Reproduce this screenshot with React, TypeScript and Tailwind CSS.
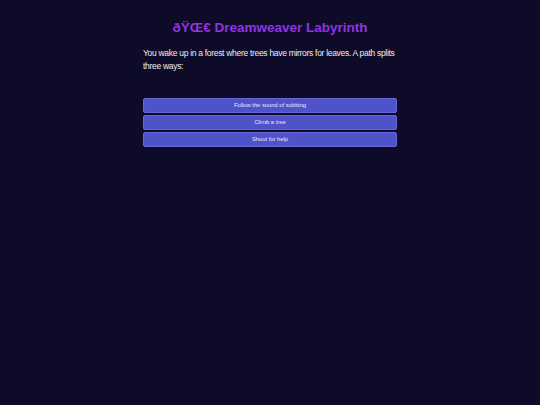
export default function App() {
  const choices = ['Follow the sound of sobbing', 'Climb a tree', 'Shout for help'];
  return (
    <div className="min-h-screen w-full bg-[#0e0b29] font-['Liberation_Sans',Arial,sans-serif] text-[#e5e3f5]">
      <div className="mx-auto w-[254px] pt-[19px]">
        <h1 className="text-center text-[13.5px] leading-[17px] font-bold text-[#9034e0]">ðŸŒ€ Dreamweaver Labyrinth</h1>
        <p className="mt-[11px] text-[8.5px] leading-[13px] tracking-[-0.3px] text-[#ecebf7]">
          You wake up in a forest where trees have mirrors for leaves. A path splits three ways:
        </p>
        <div className="mt-[25px] flex flex-col gap-[2px]">
          {choices.map((c) => (
            <button
              key={c}
              className="h-[15px] w-full rounded-[2px] border border-[#6567d8] bg-[#5052c9] text-[5.8px] leading-none text-[#e8e8fb]"
            >
              {c}
            </button>
          ))}
        </div>
      </div>
    </div>
  );
}
